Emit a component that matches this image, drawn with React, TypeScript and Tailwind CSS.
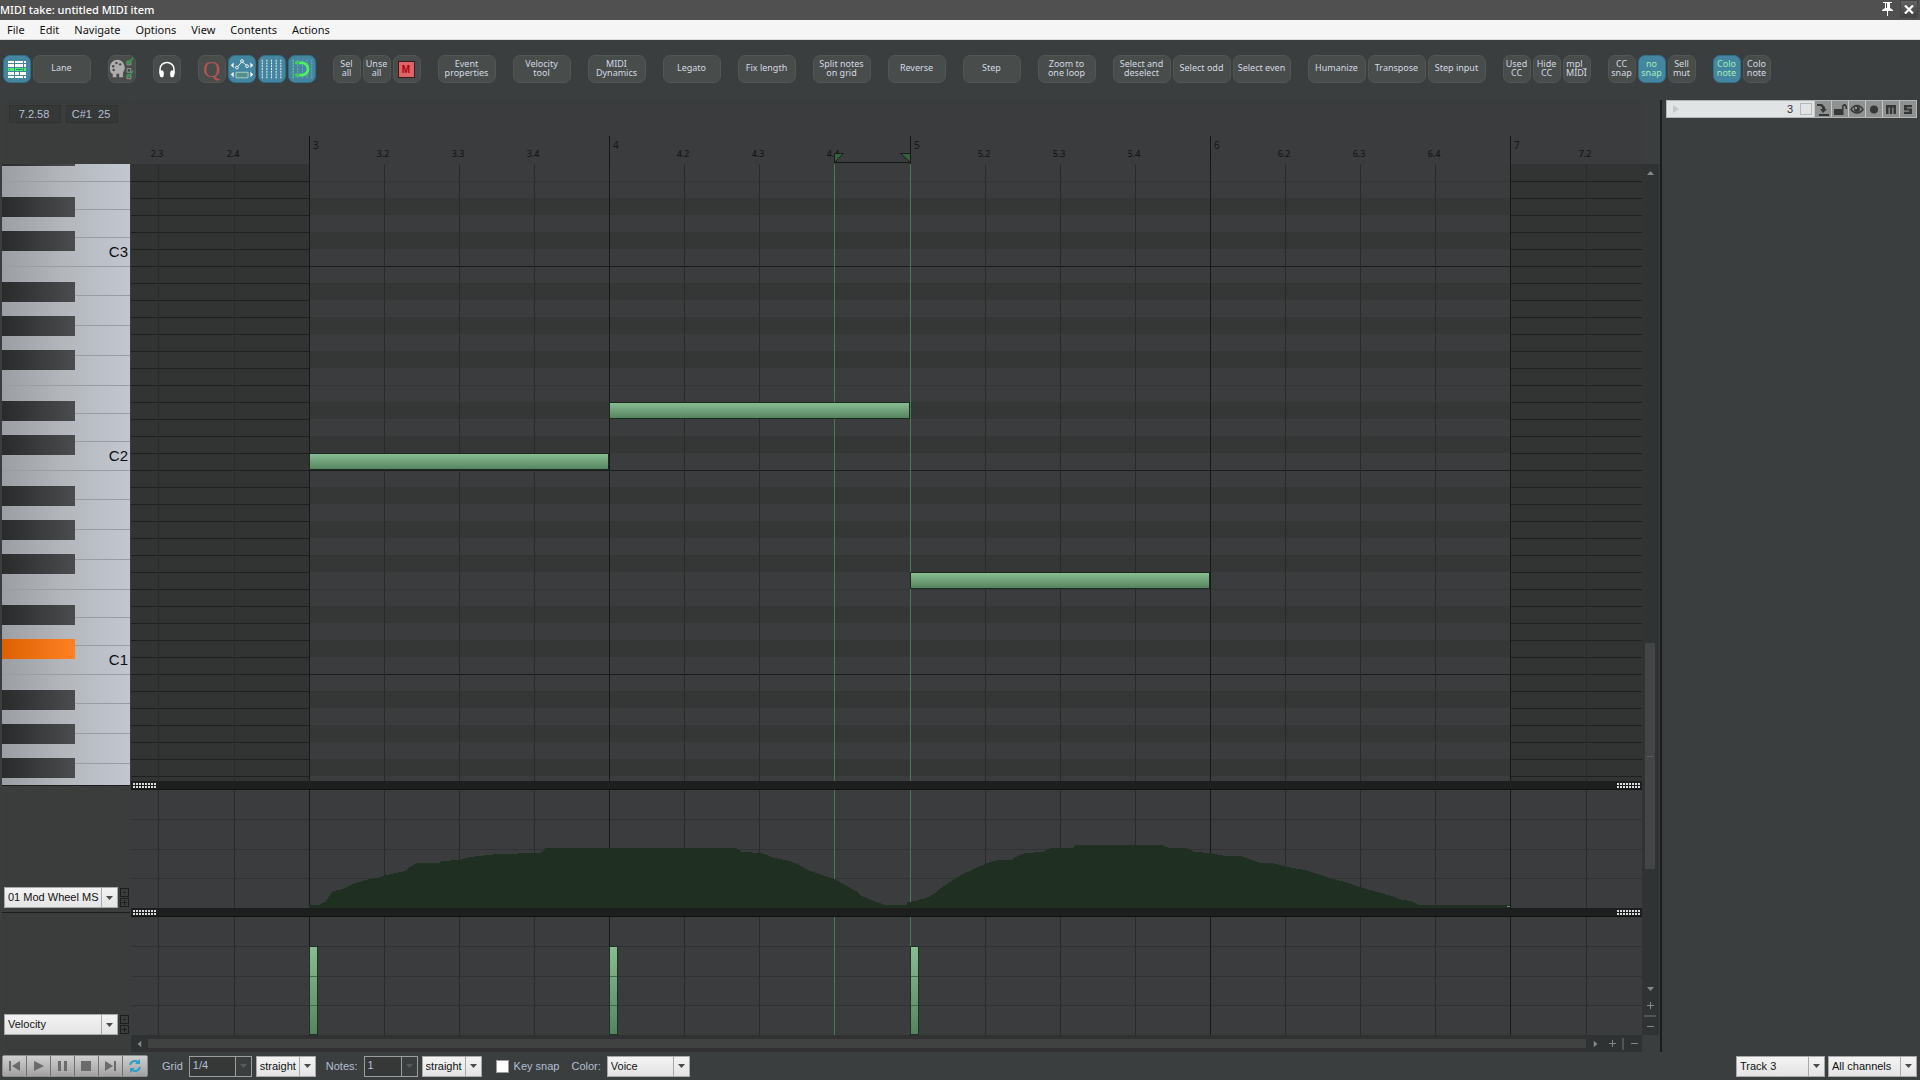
import React from 'react';

const ROW = 17;
const ROLL_ROWS = 37;
const ITEM_START = 178;
const ITEM_END = 1379;
const BARS = [178, 478, 779, 1079, 1379];
const BEATS = [27, 103, 253, 328, 403, 553, 628, 703, 854, 929, 1004, 1154, 1229, 1304, 1455];
const LOOP = [703, 779];

// pitch class of the first visible row is F, then downwards
const BLACK_CLASSES = [1, 3, 6, 8, 10];
const pitchClass = (row: number) => (((5 - row) % 12) + 12) % 12;

const BEAT_LABELS = ['2.3', '2.4', '3.2', '3.3', '3.4', '4.2', '4.3', '4.4', '5.2', '5.3', '5.4', '6.2', '6.3', '6.4', '7.2'];

const NOTES = [
  { row: 17, start: 178, end: 478 },
  { row: 14, start: 478, end: 779 },
  { row: 24, start: 779, end: 1079 },
];

const CURVE =
  '178,118 178,115 188,115 193,112 197,108 202,101 208,100 214,98 222,94 228,92 234,90 246,88 256,85 264,83 274,81 279,77 286,73 308,73 311,71 328,70 340,67 348,66 366,64 409,63 412,60 415,58 605,58 611,62 631,63 643,68 659,71 668,75 679,81 698,87 703,89 714,95 725,101 729,105 743,111 754,115 776,115 776,112 784,111 798,107 804,103 810,98 816,94 830,85 843,79 856,73 867,70 880,70 887,66 894,63 912,62 920,58 942,58 944,55 1031,55 1038,58 1055,58 1064,62 1080,63 1094,66 1109,66 1118,69 1129,73 1141,73 1157,77 1174,80 1186,84 1198,88 1210,91 1229,97 1246,102 1261,106 1271,110 1280,111 1288,115 1379,115 1379,118';

interface ToolItem {
  label?: string;
  icon?: React.ReactNode;
  name?: string;
  wide?: boolean;
  active?: boolean;
}

const GridIcon = () => (
  <svg width="28" height="28" viewBox="0 0 28 28" shapeRendering="crispEdges">
    <path d="M4 5h3v2H4zM8 5h3v2H8zM12 5h8v2h-8zM21 5h3v2h-3z" fill="#fff" />
    <path d="M8 9h3v3H8zM12 9h8v3h-8zM21 9h3v3h-3zM4 9h3v3H4z" fill="#fff" />
    <path d="M4 13h3v3H4zM8 13h3v3H8zM12 13h8v3h-8zM21 13h3v3h-3z" fill="#4df16f" />
    <path d="M4 17h3v3H4zM8 17h3v3H8zM12 17h4v3h-4zM17 17h7v3h-7z" fill="#fff" />
    <path d="M4 21h3v3H4zM8 21h3v3H8zM12 21h8v3h-8zM21 21h3v3h-3z" fill="#fff" />
    <path d="M5 14h1v1H5zM13 14h6v1h-6z" fill="#2a8a55" />
  </svg>
);

const PaletteIcon = () => (
  <svg width="28" height="28" viewBox="0 0 28 28">
    <path d="M9 4C4 4 1 8 1 13c0 4 1 6 3 6v4h4v-4h3v4h4v-5l2-4c0-6-3-10-8-10z" fill="#adadad" />
    <g fill="#4c4848">
      <circle cx="4.500" cy="11" r="1.300" />
      <circle cx="8" cy="7.500" r="1.300" />
      <circle cx="12" cy="9" r="1.300" />
      <circle cx="5" cy="15" r="1.300" />
    </g>
    <g fill="none" stroke="#9a9a9a">
      <path d="M19.500 5.500h4v4h-4zM19.500 13.500h4v4h-4zM19.500 20.500h4v4h-4z" />
    </g>
    <path d="M19 6l2 2 5-6M19 20l2 2 5-6" fill="none" stroke="#2f9a4c" strokeWidth="1.800" />
  </svg>
);

const HeadphonesIcon = () => (
  <svg width="28" height="28" viewBox="0 0 28 28">
    <path d="M6.500 19v-5a7.500 7 0 0 1 15 0v5" fill="none" stroke="#fff" strokeWidth="1.600" />
    <path d="M6 15.500h3.500c1.500 1.500 1.500 6 0 7.500H8c-1.500-.5-2-2-2-4zM22 15.500h-3.500c-1.500 1.500-1.500 6 0 7.500H20c1.500-.5 2-2 2-4z" fill="#fff" />
  </svg>
);

const EnvelopeIcon = () => (
  <svg width="28" height="28" viewBox="0 0 28 28">
    <path d="M5 7v6L2 10zM23 7v6l3-3zM5 17v6l-3-3zM23 17v6l3-3z" fill="#fff" />
    <path d="M9 12l5-6 6 5" fill="none" stroke="#e6eef2" />
    <g fill="#4486a0" stroke="#fff">
      <circle cx="8.500" cy="12.500" r="1.500" />
      <circle cx="14" cy="5.500" r="1.500" />
      <circle cx="19.500" cy="11" r="1.500" />
    </g>
    <path d="M7.500 17.500h13v6h-13z" fill="#568f8c" stroke="#a9d3cc" />
  </svg>
);

const DottedGridIcon = () => (
  <svg width="28" height="28" viewBox="0 0 28 28">
    <path d="M3.500 4v20M8.500 4v20M13.500 4v20M18.500 4v20M23.500 4v20" stroke="#fff" strokeDasharray="2 1" />
  </svg>
);

const SnapIcon = () => (
  <svg width="28" height="28" viewBox="0 0 28 28">
    <path d="M4.500 4v20" stroke="#63f07b" strokeDasharray="2 1" />
    <path d="M9.500 4v20M14.500 4v20M19.500 4v20M24.500 4v20" stroke="#77abc0" strokeDasharray="2 1" />
    <path d="M7 7.500h7a6.500 6.500 0 0 1 0 13H7" fill="none" stroke="#4df25e" strokeWidth="3" />
    <path d="M8 7.500h3M8 20.500h3" stroke="#2c8a4c" />
  </svg>
);

const TOOL_GROUPS: ToolItem[][] = [
  [{ icon: <GridIcon />, name: 'Piano roll', active: true }, { label: 'Lane', wide: true }],
  [{ icon: <PaletteIcon />, name: 'Color palette' }],
  [{ icon: <HeadphonesIcon />, name: 'Preview' }],
  [
    { icon: <span className="pr-px font-['Liberation_Serif',serif] text-[24px] leading-7 text-[#b5534f]">Q</span>, name: 'Quantize' },
    { icon: <EnvelopeIcon />, name: 'Move CC with notes', active: true },
    { icon: <DottedGridIcon />, name: 'Grid', active: true },
    { icon: <SnapIcon />, name: 'Snap', active: true },
  ],
  [
    { label: 'Sel\nall' },
    { label: 'Unse\nall' },
    {
      icon: (
        <span className="mr-0.5 flex size-[17px] items-center justify-center border border-[#3a1c1e] bg-[#dd6467] font-['Liberation_Sans',sans-serif] text-[10px] font-bold text-[#b00008]">
          M
        </span>
      ),
      name: 'Mute',
    },
  ],
  [{ label: 'Event\nproperties', wide: true }],
  [{ label: 'Velocity\ntool', wide: true }],
  [{ label: 'MIDI\nDynamics', wide: true }],
  [{ label: 'Legato', wide: true }],
  [{ label: 'Fix length', wide: true }],
  [{ label: 'Split notes\non grid', wide: true }],
  [{ label: 'Reverse', wide: true }],
  [{ label: 'Step', wide: true }],
  [{ label: 'Zoom to\none loop', wide: true }],
  [
    { label: 'Select and\ndeselect', wide: true },
    { label: 'Select odd', wide: true },
    { label: 'Select even', wide: true },
  ],
  [
    { label: 'Humanize', wide: true },
    { label: 'Transpose', wide: true },
    { label: 'Step input', wide: true },
  ],
  [{ label: 'Used\nCC' }, { label: 'Hide\nCC' }, { label: 'mpl_\nMIDI' }],
  [{ label: 'CC\nsnap' }, { label: 'no\nsnap', active: true }, { label: 'Sell\nmut' }],
  [{ label: 'Colo\nnote', active: true }, { label: 'Colo\nnote' }],
];

const ToolButton: React.FC<{ item: ToolItem }> = ({ item }) => (
  <button
    aria-label={item.name}
    className={`flex h-7 shrink-0 items-center justify-center overflow-hidden rounded-[7px] border text-[9px] leading-[9px] whitespace-pre ${
      item.wide ? 'w-[58px]' : 'w-7'
    } ${item.active ? 'border-[#2f6f8a] bg-[#4486a0] text-[#a5ecb4]' : 'border-[#525655] bg-[#484c4b] text-[#d5d9e2]'} ${
      item.label ? 'pr-px pb-[3px]' : ''
    }`}
  >
    {item.label ?? item.icon}
  </button>
);

const Arrow: React.FC<{ className?: string }> = ({ className = '' }) => (
  <svg width="7" height="4" viewBox="0 0 7 4" className={className}>
    <path d="M0 0h7L3.500 4z" fill="currentColor" />
  </svg>
);

interface SelectProps {
  label: string;
  value: string;
  className: string;
}

const Select: React.FC<SelectProps> = ({ label, value, className }) => (
  <span className={`relative block h-[21px] shrink-0 ${className}`}>
    <select
      aria-label={label}
      defaultValue={value}
      className="block h-full w-full appearance-none border border-[#a8a8a8] bg-linear-to-b from-[#f3f3f3] to-[#e4e4e4] pr-[17px] pl-[3px] text-[11px] text-[#111]"
    >
      <option>{value}</option>
    </select>
    <span className="pointer-events-none absolute inset-y-0 right-0 flex w-[17px] items-center justify-center border-l border-[#a8a8a8] pr-px text-[#4a4a4a]">
      <Arrow />
    </span>
  </span>
);

const Combo: React.FC<SelectProps & { id: string }> = ({ id, label, value, className }) => (
  <span className="flex items-center gap-1.5">
    <label htmlFor={id}>{label}</label>
    <span className={`flex h-[21px] border border-[#9b9e9e] ${className}`}>
      <input id={id} defaultValue={value} className="min-w-0 flex-1 bg-[#363838] pb-0.5 pl-[3px] text-[11px] text-[#b4bfd3] outline-none" />
      <button aria-label={`${label} presets`} className="flex w-4 items-center justify-center border-l border-[#9b9e9e] text-[#575a5a]">
        <Arrow />
      </button>
    </span>
  </span>
);

const Grip = () => (
  <svg width="24" height="5" shapeRendering="crispEdges" fill="#dcdcdc">
    {Array.from({ length: 8 }, (_, i) => (
      <path key={i} d={`M${i * 3} 0h2v2h-2zM${i * 3} 3h2v2h-2z`} />
    ))}
  </svg>
);

const LaneDivider = () => (
  <div className="flex h-[9px] shrink-0 items-center justify-between border-b border-[#101111] bg-[#1d1f1e] pr-px pl-0.5">
    <Grip />
    <Grip />
  </div>
);

const GridLines = () => (
  <>
    {BEATS.map((x) => (
      <rect key={x} x={x} y="0" width="1" height="100%" fill="#292b2b" />
    ))}
    {BARS.map((x) => (
      <rect key={x} x={x} y="0" width="1" height="100%" fill="#171918" />
    ))}
  </>
);

const LoopLines = () => (
  <>
    {LOOP.map((x) => (
      <rect key={x} x={x} y="0" width="1" height="100%" fill="#437f4a" />
    ))}
  </>
);

const Ruler = () => (
  <svg className="block h-16 w-full shrink-0 font-['Noto_Sans',sans-serif]" shapeRendering="crispEdges" fill="#151716">
    {BARS.map((x, i) => (
      <g key={x}>
        <rect x={x} y="36" width="1" height="28" />
        <text x={x + 4} y="49" fontSize="10">{i + 3}</text>
      </g>
    ))}
    {BEATS.map((x, i) => (
      <text key={x} x={x - 1} y="57" fontSize="9" fontWeight="500" textAnchor="middle">{BEAT_LABELS[i]}</text>
    ))}
    <path d="M703.500 53.500h9l-9 9zM779.500 53.500h-10l10 9z" fill="#34613a" stroke="#1a1d1b" shapeRendering="auto" />
    <rect x="703" y="62" width="76" height="1" />
  </svg>
);

const PianoRoll = () => {
  const rows = Array.from({ length: ROLL_ROWS }, (_, i) => i);
  return (
    <svg className="block min-h-0 w-full flex-1 bg-[#323433]" shapeRendering="crispEdges">
      <defs>
        <linearGradient id="note" x1="0" y1="0" x2="0" y2="1">
          <stop offset="0" stopColor="#88bd92" />
          <stop offset="1" stopColor="#578460" />
        </linearGradient>
      </defs>
      {rows.map((r) => (
        <rect key={r} x="0" y={r * ROW + ROW} width="100%" height="1" fill="#1e201f" />
      ))}
      {rows.map((r) => (
        <rect
          key={r}
          x={ITEM_START}
          y={r * ROW}
          width={ITEM_END - ITEM_START}
          height={ROW}
          fill={BLACK_CLASSES.includes(pitchClass(r)) ? '#353736' : '#3b3c3d'}
        />
      ))}
      {/* octave line under every C, a fainter one under every F */}
      {rows.filter((r) => pitchClass(r) === 0 || pitchClass(r) === 5).map((r) => (
        <rect
          key={r}
          x={ITEM_START}
          y={(r + 1) * ROW}
          width={ITEM_END - ITEM_START}
          height="1"
          fill={pitchClass(r) === 0 ? '#1b1d1c' : '#353637'}
        />
      ))}
      <GridLines />
      <LoopLines />
      {NOTES.map((n) => (
        <g key={n.row}>
          <rect x={n.start} y={n.row * ROW} width={n.end - n.start} height={ROW} fill="#1b2a1e" />
          <rect x={n.start + 1} y={n.row * ROW + 1} width={n.end - n.start - 2} height={ROW - 2} fill="url(#note)" />
        </g>
      ))}
    </svg>
  );
};

const LaneLines = () => (
  <>
    {[29, 59, 88].map((y) => (
      <rect key={y} x="0" y={y} width="100%" height="1" fill="#313332" />
    ))}
  </>
);

const ModWheelLane = () => (
  <svg className="block h-[118px] w-full shrink-0" shapeRendering="crispEdges">
    <LaneLines />
    <GridLines />
    <LoopLines />
    <polygon points={CURVE} fill="#1f2f21" />
    <rect x="1376" y="116" width="3" height="1" fill="#6aa574" />
  </svg>
);

const VelocityLane = () => (
  <svg className="block h-[118px] w-full shrink-0" shapeRendering="crispEdges">
    <LaneLines />
    <GridLines />
    <LoopLines />
    {NOTES.map((n) => (
      <g key={n.start}>
        <rect x={n.start} y="29" width="9" height="89" fill="#1b3320" />
        <rect x={n.start + 1} y="30" width="7" height="87" fill="url(#note)" />
        <rect x={n.start + 1} y="59" width="7" height="1" fill="#44694b" />
        <rect x={n.start + 1} y="88" width="7" height="1" fill="#44694b" />
      </g>
    ))}
  </svg>
);

const Keyboard = () => (
  <svg className="block min-h-0 w-full flex-1 font-['Liberation_Sans',sans-serif]" shapeRendering="crispEdges">
    <defs>
      <linearGradient id="white-key">
        <stop offset="0" stopColor="#9b9ea2" />
        <stop offset="0.500" stopColor="#b4b8bd" />
        <stop offset="1" stopColor="#c2c6d0" />
      </linearGradient>
      <linearGradient id="black-key">
        <stop offset="0" stopColor="#292a2b" />
        <stop offset="1" stopColor="#4b4c4e" />
      </linearGradient>
      <linearGradient id="active-key">
        <stop offset="0" stopColor="#dc6000" />
        <stop offset="1" stopColor="#ff8124" />
      </linearGradient>
    </defs>
    <rect width="100%" height="100%" fill="url(#white-key)" />
    {[-102, 102, 306, 510].map((top) => (
      <g key={top} fill="#999ca1">
        {[29, 59, 89, 119, 147, 175, 204].map((dy) => (
          <rect key={dy} x="0" y={top + dy} width="100%" height="1" />
        ))}
      </g>
    ))}
    {Array.from({ length: ROLL_ROWS + 1 }, (_, i) => i - 1).filter((r) => BLACK_CLASSES.includes(pitchClass(r))).map((r) => (
      <rect key={r} x="0" y={r * ROW - 1} width="73" height="20" fill={r === 28 ? 'url(#active-key)' : 'url(#black-key)'} />
    ))}
    {['C3', 'C2', 'C1'].map((name, i) => (
      <text key={name} x="126" y={93 + i * 204} fontSize="15" textAnchor="end" fill="#0d0d0f">{name}</text>
    ))}
  </svg>
);

const LaneControls: React.FC<{ label: string; value: string }> = ({ label, value }) => (
  <div className="flex gap-0.5 pl-0.5">
    <Select label={label} value={value} className="w-[114px]" />
    <div className="flex flex-col justify-center gap-px text-[#1c1e1d]">
      <button aria-label="Remove lane" className="flex size-[9px] items-center justify-center border border-current">
        <svg width="5" height="5"><path d="M1 2.500h3" stroke="currentColor" /></svg>
      </button>
      <button aria-label="Add lane" className="flex size-[9px] items-center justify-center border border-current">
        <svg width="5" height="5"><path d="M0 2.500h5M2.500 0v5" stroke="currentColor" /></svg>
      </button>
    </div>
  </div>
);

const Plus = () => <svg width="7" height="7"><path d="M0 3.500h7M3.500 0v7" stroke="currentColor" /></svg>;
const Minus = () => <svg width="7" height="7"><path d="M0 3.500h7" stroke="currentColor" /></svg>;

const HorizontalScroll = () => (
  <div className="flex h-[17px] shrink-0 items-center bg-[#2f3233] text-[#868888]">
    <button aria-label="Scroll left" className="flex w-[17px] justify-center"><Arrow className="rotate-90" /></button>
    <div className="flex h-full flex-1 items-center bg-[#313131]">
      <div className="h-[9px] w-full bg-[#404141]" />
    </div>
    <button aria-label="Scroll right" className="flex w-[18px] justify-center"><Arrow className="-rotate-90" /></button>
    <button aria-label="Zoom in" className="flex w-4 justify-center"><Plus /></button>
    <span className="mx-0.5 h-3 w-0.5 bg-[#525555]" />
    <button aria-label="Zoom out" className="flex w-4 justify-center"><Minus /></button>
  </div>
);

const VerticalScroll = () => (
  <div className="flex min-h-0 flex-1 flex-col items-center bg-[#2f3333] pr-px text-[#868888]">
    <button aria-label="Scroll up" className="flex h-[17px] items-center"><Arrow className="rotate-180" /></button>
    <div className="flex w-2.5 flex-1 flex-col">
      <div className="grow-[463]" />
      <div className="flex grow-[225] items-center justify-center bg-[#434546]">
        <span className="h-px w-1.5 bg-[#5b5d5e]" />
      </div>
      <div className="grow-[111]" />
    </div>
    <button aria-label="Scroll down" className="flex h-[17px] items-center"><Arrow /></button>
    <button aria-label="Zoom in" className="flex h-[17px] items-center"><Plus /></button>
    <span className="my-px h-0.5 w-3 bg-[#525555]" />
    <button aria-label="Zoom out" className="flex h-[17px] items-center"><Minus /></button>
  </div>
);

const TRACK_BUTTONS: { name: string; icon: React.ReactNode }[] = [
  { name: 'Target track', icon: <path d="M2 3h5l3 3v2h2l-4 4-3-4h2V6L5 5H2zM4 13h10v2H4z" /> },
  { name: 'Lock', icon: <path d="M2 8h8V6c0-4 5-4 5 0v2h-1.500V6c0-1.500-2-1.500-2 0v8H2z" /> },
  {
    name: 'Visible',
    icon: (
      <>
        <path d="M2 8.500C5 3 11 3 14 8.500 11 13 5 13 2 8.500z" fill="none" stroke="currentColor" strokeWidth="1.500" />
        <circle cx="8" cy="8" r="3" />
        <circle cx="7" cy="7" r="1" fill="#bbb" />
      </>
    ),
  },
  { name: 'Record arm', icon: <circle cx="8" cy="8.500" r="4" /> },
  { name: 'Mute', icon: <path d="M3 13V4h10v9h-2.500V6.500H9.200V13H6.800V6.500H5.500V13z" /> },
  { name: 'Solo', icon: <path d="M4 4h8v2.200H6.800v1.200H12V13H4v-2.200h5.200V9.600H4z" /> },
];

const TrackPanel = () => (
  <aside className="flex w-[258px] shrink-0 flex-col pr-[3px] pl-1">
    <div className="flex h-[18px] border border-[#b3b6b7] bg-[#c6c8c8]">
      <div className="flex flex-1 items-center bg-[#e0e4e5] pr-0.5 pl-1.5 text-[11px] text-[#333]">
        <svg width="6" height="8"><path d="M0 0l6 4-6 4z" fill="#c6c8c8" /></svg>
        <span className="flex-1 pr-[7px] text-right">3</span>
        <input type="checkbox" aria-label="Track 3 enabled" className="size-3 appearance-none border border-[#b5b8b9]" />
      </div>
      {TRACK_BUTTONS.map((t) => (
        <button key={t.name} aria-label={t.name} className="ml-px h-4 w-4 bg-[#8f9090] text-[#363838]">
          <svg width="16" height="16" viewBox="0 0 16 16" fill="currentColor">{t.icon}</svg>
        </button>
      ))}
    </div>
  </aside>
);

const TRANSPORT: { name: string; icon: React.ReactNode }[] = [
  { name: 'Go to start', icon: <path d="M5 5h2v10H5zM16 5v10l-8-5z" /> },
  { name: 'Play', icon: <path d="M6 5l10 5-10 5z" /> },
  { name: 'Pause', icon: <path d="M6 5h3v10H6zM12 5h3v10h-3z" /> },
  { name: 'Stop', icon: <path d="M5 5h10v10H5z" /> },
  { name: 'Go to end', icon: <path d="M5 5l8 5-8 5zM14 5h2v10h-2z" /> },
  {
    name: 'Repeat',
    icon: (
      <g>
        <path d="M6 9a5 5 0 0 1 8-3M16 11a5 5 0 0 1-8 3" fill="none" stroke="#2d9fc4" strokeWidth="2" />
        <path d="M11 8h5V3zM11 12H6v5z" fill="#2d9fc4" />
      </g>
    ),
  },
];

const Transport = () => (
  <div className="flex h-[22px] rounded-xs border border-[#8b8d8d] bg-[#6f7171]">
    {TRANSPORT.map((t) => (
      <button
        key={t.name}
        aria-label={t.name}
        className="flex w-6 items-center justify-center border-r border-[#6f7171] bg-linear-to-b from-[#cfcfcf] to-[#a3a3a3] text-[#6b6b6b] last:border-r-0"
      >
        <svg width="22" height="20" viewBox="0 0 22 20" fill="currentColor">{t.icon}</svg>
      </button>
    ))}
  </div>
);

const App: React.FC = () => {
  return (
    <div className="flex h-screen flex-col overflow-hidden bg-[#3b3e3e] font-['Liberation_Sans',Arial,sans-serif] text-[11px] text-[#b4bfd3]">
      <header className="flex h-5 shrink-0 items-center justify-between bg-[#505050] pr-0.5">
        <h1 className="font-['Noto_Sans',sans-serif] text-[11px] font-medium text-white">MIDI take: untitled MIDI item</h1>
        <div className="flex h-full items-start gap-1.5 text-white">
          <button aria-label="Pin window" className="pt-0.5">
            <svg width="13" height="14" viewBox="0 0 13 14" fill="currentColor">
              <path d="M2 0h9v1H9v5l3 2v1H7v5H6V9H1V8l3-2V1H2z" />
              <path d="M5 1h1v5H5z" fill="#505050" />
            </svg>
          </button>
          <button aria-label="Close" className="flex h-[18px] w-[18px] items-center justify-center border border-[#454545] bg-linear-to-b from-[#626262] to-[#434343]">
            <svg width="10" height="9" viewBox="0 0 10 9"><path d="M1 .5l8 8M9 .5l-8 8" stroke="#fff" strokeWidth="2.200" /></svg>
          </button>
        </div>
      </header>

      <nav className="flex h-5 shrink-0 items-center gap-px border-b border-[#dcdcdc] bg-[#f5f5f5] font-['Noto_Sans',sans-serif] text-[11px] text-[#111]">
        {['File', 'Edit', 'Navigate', 'Options', 'View', 'Contents', 'Actions'].map((m) => (
          <button key={m} className="px-[7px] pt-px">{m}</button>
        ))}
      </nav>

      <div className="flex h-[60px] shrink-0 items-start gap-[17px] pt-[15px] pl-[3px] font-['Noto_Sans',sans-serif]">
        {TOOL_GROUPS.map((group, i) => (
          <div key={i} className="flex gap-0.5">
            {group.map((item, j) => (
              <ToolButton key={j} item={item} />
            ))}
          </div>
        ))}
      </div>

      <main className="flex min-h-0 flex-1">
        <div className="ml-0.5 flex w-32 shrink-0 flex-col bg-[#3b3c3c]">
          <div className="flex h-16 shrink-0 items-start gap-[5px] pt-[5px] pl-[7px]">
            <span className="flex h-[18px] w-[52px] items-center justify-center border border-[#303231] bg-[#363837] pr-0.5">7.2.58</span>
            <span className="flex h-[18px] w-[52px] items-center justify-center border border-[#303231] bg-[#363837] pr-0.5 whitespace-pre">C#1  25</span>
          </div>
          <Keyboard />
          <div className="flex h-32 shrink-0 flex-col justify-end border-y border-[#1c1e1d] pb-1">
            <LaneControls label="Lane 1" value="01 Mod Wheel MS" />
          </div>
          <div className="flex h-[139px] shrink-0 flex-col justify-end pb-[17px]">
            <LaneControls label="Lane 2" value="Velocity" />
          </div>
        </div>

        <div className="ml-px flex min-w-0 flex-1 flex-col bg-[#3b3c3d]">
          <Ruler />
          <PianoRoll />
          <LaneDivider />
          <ModWheelLane />
          <LaneDivider />
          <VelocityLane />
          <HorizontalScroll />
        </div>

        <div className="mr-px flex w-[17px] shrink-0 flex-col pt-16 pb-[17px]">
          <VerticalScroll />
        </div>
        <div className="w-0.5 shrink-0 bg-[#1b1d1d]" />
        <TrackPanel />
      </main>

      <footer className="flex h-7 shrink-0 items-center pr-[3px] pl-0.5">
        <Transport />
        <div className="ml-3.5 flex items-center gap-1">
          <Combo id="grid" label="Grid" value="1/4" className="w-[63px]" />
          <Select label="Grid type" value="straight" className="w-[60px]" />
        </div>
        <div className="ml-2.5 flex items-center gap-1">
          <Combo id="notes" label="Notes:" value="1" className="w-[54px]" />
          <Select label="Note type" value="straight" className="w-[60px]" />
        </div>
        <label className="ml-3.5 flex items-center gap-[5px]">
          <input type="checkbox" className="size-[13px] appearance-none border border-[#9a9a9a] bg-white" />
          Key snap
        </label>
        <span className="ml-3 flex items-center gap-1.5">
          Color:
          <Select label="Color" value="Voice" className="w-[83px]" />
        </span>
        <div className="ml-auto flex gap-[3px]">
          <Select label="Track" value="Track 3" className="w-[89px]" />
          <Select label="Channel" value="All channels" className="w-[89px]" />
        </div>
      </footer>
    </div>
  );
};

export default App;
